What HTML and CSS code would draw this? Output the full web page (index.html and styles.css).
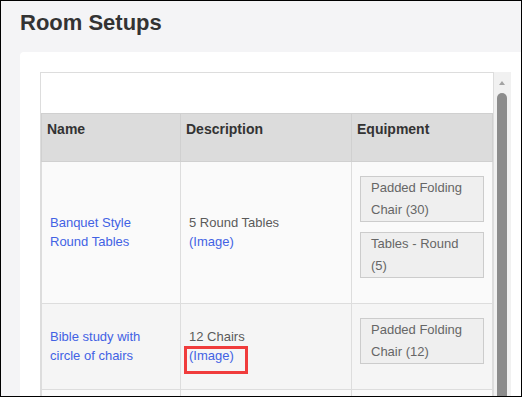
FILE: index.html
```html
<!DOCTYPE html>
<html lang="en">
<head>
  <meta charset="UTF-8" />
  <meta name="viewport" content="width=device-width, initial-scale=1.0"/>
  <title>Room Setups</title>
  <link rel="stylesheet" href="styles.css">
</head>
<body>
  <div class="frame">
    <h1 class="page-title">Room Setups</h1>

    <div class="card">
      <div class="scroller">
        <div class="grid-box">
          <div class="toolbar"></div>
          <table class="setups">
            <colgroup>
              <col class="col-name">
              <col class="col-desc">
              <col>
            </colgroup>
            <thead>
              <tr>
                <th>Name</th>
                <th>Description</th>
                <th>Equipment</th>
              </tr>
            </thead>
            <tbody>
              <tr class="odd">
                <td><a href="#">Banquet Style Round Tables</a></td>
                <td>5 Round Tables<br><a href="#">(Image)</a></td>
                <td>
                  <span class="equip">Padded Folding Chair (30)</span>
                  <span class="equip">Tables - Round (5)</span>
                </td>
              </tr>
              <tr class="even">
                <td><a href="#">Bible study with circle of chairs</a></td>
                <td>12 Chairs<br><a href="#" class="marked">(Image)</a></td>
                <td>
                  <span class="equip">Padded Folding Chair (12)</span>
                </td>
              </tr>
              <tr class="odd more">
                <td></td>
                <td></td>
                <td></td>
              </tr>
            </tbody>
          </table>
        </div>
        <div class="scrollbar">
          <span class="arrow-up"></span>
          <span class="thumb"></span>
        </div>
      </div>
    </div>
  </div>
</body>
</html>
```

FILE: styles.css
```css
html, body {
  margin: 0;
  padding: 0;
}

body {
  font-family: "Liberation Sans", Arial, Helvetica, sans-serif;
  color: #5a5a5a;
}

.frame {
  box-sizing: border-box;
  width: 522px;
  height: 397px;
  border: 1px solid #000;
  background-color: #f4f4f6;
  overflow: hidden;
  padding: 8px 0 0 19px;
}

.page-title {
  margin: 0 0 15px 0;
  font-size: 22px;
  line-height: 28px;
  font-weight: bold;
  color: #333;
}

.card {
  background-color: #fff;
  border-radius: 4px;
  margin-right: -10px;
  padding: 20px;
  height: 400px;
}

.scroller {
  display: flex;
  align-items: stretch;
}

.grid-box {
  flex: 1;
  border: 1px solid #ddd;
  border-bottom: none;
}

.toolbar {
  height: 40px;
}

.scrollbar {
  width: 17px;
  flex-shrink: 0;
  background-color: #f1f1f1;
  display: flex;
  flex-direction: column;
  align-items: flex-start;
}

.arrow-up {
  width: 0;
  height: 0;
  margin: 9px 0 0 5px;
  border-left: 3.5px solid transparent;
  border-right: 3.5px solid transparent;
  border-bottom: 4px solid #a3a3a3;
}

.thumb {
  width: 10px;
  height: 400px;
  margin: 8px 0 0 3px;
  border-radius: 5px 5px 0 0;
  background-color: #8c8c8c;
}

.setups {
  width: 100%;
  table-layout: fixed;
  border-collapse: collapse;
  border: 1px solid #ddd;
}

.col-name {
  width: 139px;
}

.col-desc {
  width: 171px;
}

.setups th {
  background-color: #dcdcdc;
  color: #333;
  font-size: 14px;
  font-weight: bold;
  line-height: 20px;
  text-align: left;
  vertical-align: top;
  padding: 5px 5px 22px;
  border: 1px solid #d0d0d0;
}

.setups td {
  font-size: 13px;
  line-height: 19.5px;
  vertical-align: middle;
  padding: 14px 8px 15px;
  border: 1px solid #ddd;
}

.setups tr.odd td {
  background-color: #fafafa;
}

.setups tr.even td {
  background-color: #f5f5f5;
}

.setups tr.more td {
  height: 60px;
}

.setups a {
  color: #4262e4;
  text-decoration: none;
}

.setups a.marked {
  position: relative;
}

.setups a.marked::after {
  content: "";
  position: absolute;
  left: -5px;
  right: -14px;
  top: -2px;
  bottom: -11px;
  border: 3px solid #f03c3c;
}

.equip {
  display: block;
  border: 1px solid #ccc;
  background-color: #efefef;
  color: #666;
  line-height: 22px;
  padding: 0 10px;
  margin-bottom: 10px;
}
```
